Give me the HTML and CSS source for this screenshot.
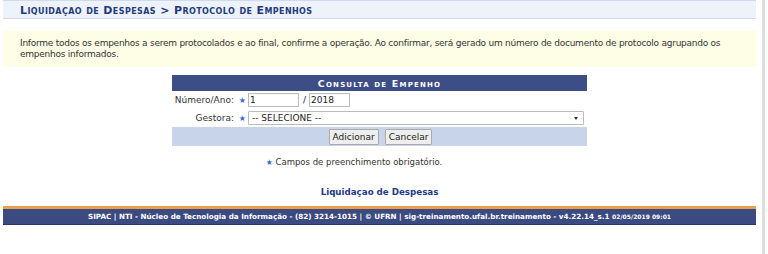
FILE: index.html
```html
<!DOCTYPE html>
<html lang="pt">
<head>
<meta charset="utf-8">
<title>Protocolo de Empenhos</title>
<link rel="stylesheet" href="styles.css">
</head>
<body>
<div class="page">
  <main class="main">
    <h2 class="title">Liquidaçao de Despesas &gt; Protocolo de Empenhos</h2>
    <div class="notice">Informe todos os empenhos a serem protocolados e ao final, confirme a operação. Ao confirmar, será gerado um número de documento de protocolo agrupando os empenhos informados.</div>
    <form class="form">
      <div class="caption">Consulta de Empenho</div>
      <div class="row">
        <label class="lbl">Número/Ano: <span class="star">★</span></label>
        <div class="fields">
          <input class="in num" type="text" value="1">
          <span class="slash">/</span>
          <input class="in ano" type="text" value="2018">
        </div>
      </div>
      <div class="row">
        <label class="lbl">Gestora: <span class="star">★</span></label>
        <div class="fields">
          <div class="select"><span>-- SELECIONE --</span><span class="arrow"></span></div>
        </div>
      </div>
      <div class="buttons">
        <button type="button" class="btn">Adicionar</button>
        <button type="button" class="btn">Cancelar</button>
      </div>
    </form>
    <p class="required"><span class="star">★</span> Campos de preenchimento obrigatório.</p>
    <p class="back"><a href="#">Liquidaçao de Despesas</a></p>
    <footer class="footer">SIPAC | NTI - Núcleo de Tecnologia da Informação - (82) 3214-1015 | © UFRN | sig-treinamento.ufal.br.treinamento - v4.22.14_s.1 <small>02/05/2019 09:01</small></footer>
  </main>
  <div class="scroll"></div>
</div>
</body>
</html>
```
FILE: styles.css
```css
html, body { margin: 0; padding: 0; background: #fff; }
body { font-family: "DejaVu Sans", Verdana, sans-serif; font-size: 9px; color: #222; }
.page { display: flex; height: 254px; padding-left: 3px; }
.main { width: 753px; }
.scroll { width: 3px; margin-left: 6px; background: #dedede; }
.title {
  margin: 0; height: 19px; box-sizing: border-box;
  background: #eef2fb; border-top: 1px solid #cfdaf0; border-bottom: 1px solid #cfdaf0;
  font-size: 11px; font-weight: bold; font-variant: small-caps; letter-spacing: 0.4px;
  color: #223a7a; padding: 3px 0 0 17px; line-height: 13px;
}
.notice {
  margin-top: 12px; background: #fefee6; padding: 7px 17px 6px;
  line-height: 11px; color: #333; height: 23px; letter-spacing: -0.25px;
}
.form { width: 415px; margin: 8px auto 0; background: #fff; }
.caption {
  height: 16px; background: #3d4d85; color: #fff; text-align: center;
  font-size: 9.5px; font-weight: bold; font-variant: small-caps; letter-spacing: 1.2px; line-height: 17px;
}
.row { display: flex; align-items: center; height: 18px; }
.lbl { width: 74px; text-align: right; color: #333; white-space: nowrap; margin-right: 2px; }
.star { color: #3a6ad0; font-size: 8px; margin-left: 2px; }
.fields { display: flex; align-items: center; padding-left: 0; }
.in {
  height: 14px; box-sizing: border-box; border: 1px solid #bbb; padding: 0 1px;
  font: 9px "DejaVu Sans", sans-serif; color: #222;
}
.num { width: 51px; }
.ano { width: 41px; }
.slash { margin: 0 3px 0 4px; }
.select {
  width: 336px; height: 14px; box-sizing: border-box; border: 1px solid #bbb; border-radius: 1px;
  display: flex; align-items: center; justify-content: space-between; padding: 0 5px 0 3px;
}
.arrow { width: 0; height: 0; border-left: 2px solid transparent; border-right: 2px solid transparent; border-top: 3px solid #333; }
.buttons {
  background: #c8d4ea; height: 19px; display: flex; align-items: center; justify-content: center; gap: 6px;
  padding-left: 2px;
}
.btn {
  font: 9px "DejaVu Sans", sans-serif; color: #222; height: 16px; padding: 0 3px;
  background: #eee; border: 1px solid #aaa; border-radius: 1px;
}
.required { margin: 11px 0 0; text-align: center; font-size: 8.5px; color: #333; padding-right: 51px; }
.required .star { margin-left: 0; }
.back { margin: 20px 0 0; text-align: center; font-weight: bold; font-size: 8.7px; }
.back a { color: #1f3a87; text-decoration: none; }
.footer {
  margin-top: 9px; background: #3b4a80; border-top: 3px solid #e9a04c; color: #fff;
  text-align: center; font-weight: bold; font-size: 7.2px; height: 15px; line-height: 15px;
  border-bottom: 1px solid #2a356a;
}
.footer small { font-size: 6px; }
```
